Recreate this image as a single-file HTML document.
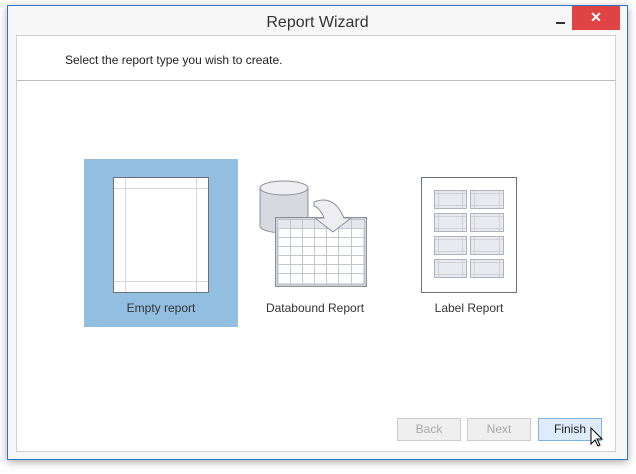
<!DOCTYPE html><html><head><style>
body{margin:0;width:636px;height:474px;background:#fff;font-family:"Liberation Sans",sans-serif;position:relative;overflow:hidden}
.win{position:absolute;left:7px;top:5px;width:619px;height:453px;border:1px solid #2b78c5;background:#f7f7f7;box-shadow:0 2px 8px rgba(0,0,0,.35)}
.t{position:absolute;left:0;right:0;top:8px;text-align:center;font-size:16px;color:#333}
.close{position:absolute;left:564px;top:0;width:48px;height:24px;background:#e04343;color:#fff;text-align:center;font-size:14px;line-height:23px;font-weight:bold}
.min{position:absolute;left:548px;top:16px;width:9px;height:2px;background:#333}
.panel{position:absolute;left:8px;top:29px;width:598px;height:415px;border:1px solid #d0d0d0;background:#fff}
.hdr{position:absolute;left:0;right:0;top:0;height:44px;border-bottom:1px solid #bdbdbd;font-size:12px;color:#222}
.lbl{position:absolute;font-size:12px;color:#333;text-align:center;width:160px}
.btn{position:absolute;top:412px;width:62px;height:21px;border:1px solid #ccc;background:#efefef;color:#aaa;font-size:12px;text-align:center;line-height:21px}
</style></head><body>
<div class="win">
<div class="t">Report Wizard</div><div class="min"></div><div class="close">✕</div>
<div class="panel"><div class="hdr"><span style="position:absolute;left:48px;top:17px">Select the report type you wish to create.</span></div></div>
<div class="btn" style="left:389px">Back</div>
<div class="btn" style="left:459px">Next</div>
<div class="btn" style="left:530px;background:#ddebfa;border-color:#7eb4ea;color:#222">Finish</div>
</div>
<div style="position:absolute;left:84px;top:159px;width:154px;height:168px;background:#92bfe0"></div>
<svg style="position:absolute;left:0;top:0" width="636" height="474">
<rect x="113.5" y="177.5" width="95" height="115" fill="#fff" stroke="#6d7080"/>
<g stroke="#d6d6e0"><line x1="114" y1="188.5" x2="208" y2="188.5"/><line x1="114" y1="281.5" x2="208" y2="281.5"/><line x1="125.5" y1="178" x2="125.5" y2="292"/><line x1="196.5" y1="178" x2="196.5" y2="292"/></g>
<path d="M260 188 v38 a24 7 0 0 0 48 0 v-38z" fill="#d8d9df" stroke="#8e909a"/>
<ellipse cx="284" cy="188" rx="24" ry="7" fill="#eeeef2" stroke="#8e909a"/>
<rect x="275.5" y="217.5" width="91" height="69" fill="#d0d1d8" stroke="#8e909a"/>
<rect x="278" y="220" width="86" height="64" fill="#fff" stroke="#b4b6c0"/>
<rect x="278" y="220" width="86" height="8" fill="#e6e7ec"/>
<g stroke="#c4c6ce"><line x1="278" y1="228.5" x2="364" y2="228.5"/><line x1="278" y1="237.5" x2="364" y2="237.5"/><line x1="278" y1="246.5" x2="364" y2="246.5"/><line x1="278" y1="255.5" x2="364" y2="255.5"/><line x1="278" y1="264.5" x2="364" y2="264.5"/><line x1="278" y1="273.5" x2="364" y2="273.5"/>
<line x1="290.5" y1="220" x2="290.5" y2="284"/><line x1="302.5" y1="220" x2="302.5" y2="284"/><line x1="314.5" y1="220" x2="314.5" y2="284"/><line x1="326.5" y1="220" x2="326.5" y2="284"/><line x1="338.5" y1="220" x2="338.5" y2="284"/><line x1="351.5" y1="220" x2="351.5" y2="284"/></g>
<path d="M314 202 q20 -8 30 16 h7 l-18 14 l-18 -14 h9 q-4 -10 -10 -12z" fill="#eeeef2" stroke="#8e909a"/>
<rect x="421.5" y="177.5" width="95" height="115" fill="#fff" stroke="#6d7080"/>
<g fill="#e9eaf0" stroke="#b0b2bc">
<rect x="434.5" y="190.5" width="32" height="18"/><rect x="470.5" y="190.5" width="33" height="18"/>
<rect x="434.5" y="213.5" width="32" height="18"/><rect x="470.5" y="213.5" width="33" height="18"/>
<rect x="434.5" y="236.5" width="32" height="18"/><rect x="470.5" y="236.5" width="33" height="18"/>
<rect x="434.5" y="259.5" width="32" height="18"/><rect x="470.5" y="259.5" width="33" height="18"/></g>
<g stroke="#cfd0d8">
<path d="M435 193.5h31M435 205.5h31M471 193.5h32M471 205.5h32M435 216.5h31M435 228.5h31M471 216.5h32M471 228.5h32M435 239.5h31M435 251.5h31M471 239.5h32M471 251.5h32M435 262.5h31M435 274.5h31M471 262.5h32M471 274.5h32"/>
<path d="M438.5 191v17M462.5 191v17M474.5 191v17M499.5 191v17M438.5 214v17M462.5 214v17M474.5 214v17M499.5 214v17M438.5 237v17M462.5 237v17M474.5 237v17M499.5 237v17M438.5 260v17M462.5 260v17M474.5 260v17M499.5 260v17"/></g>
<path d="M591 428 v16 l4 -4 l3 6 l2 -1 l-3 -6 h5z" fill="#fff" stroke="#000"/>
</svg>
<div class="lbl" style="left:81px;top:301px">Empty report</div>
<div class="lbl" style="left:235px;top:301px">Databound Report</div>
<div class="lbl" style="left:389px;top:301px">Label Report</div>
</body></html>
